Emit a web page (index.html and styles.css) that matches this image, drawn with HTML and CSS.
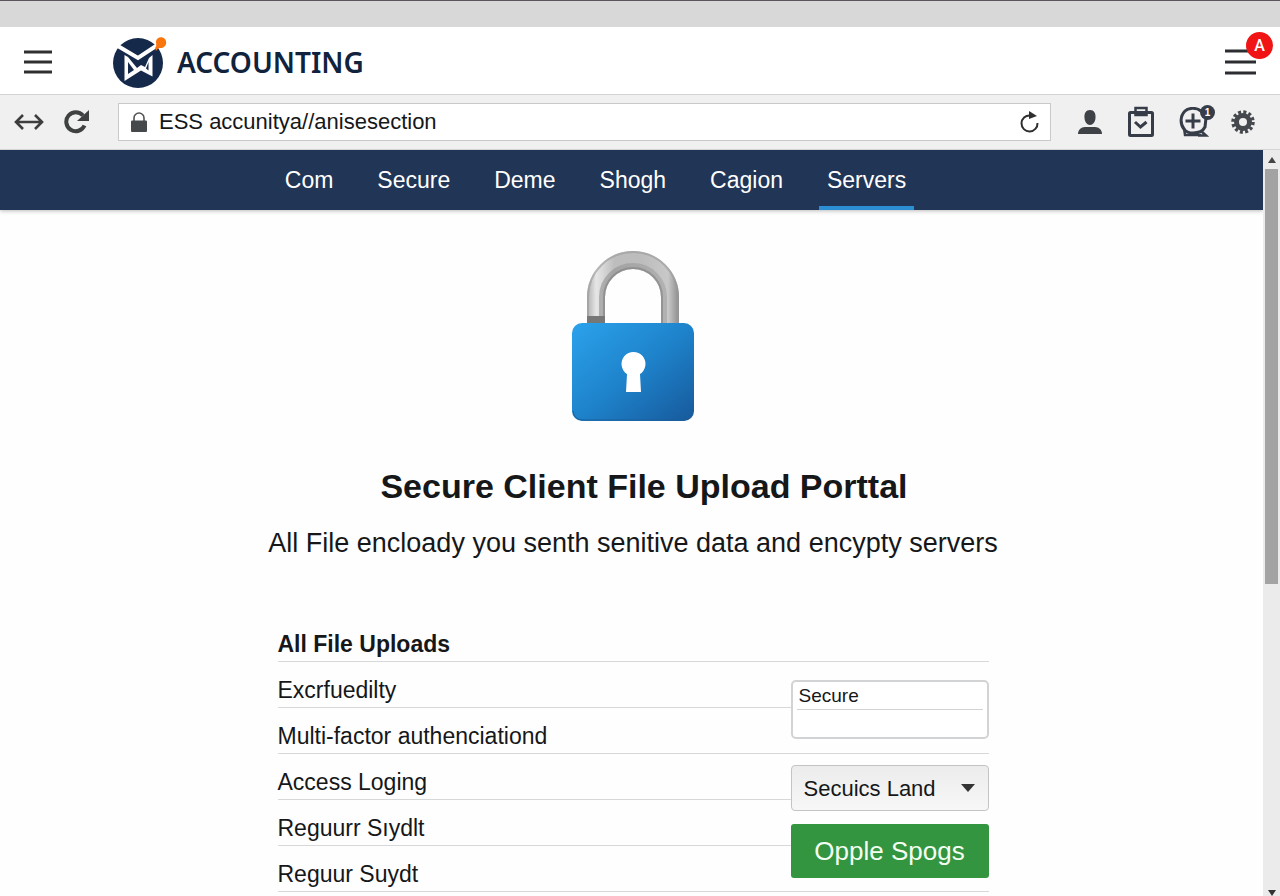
FILE: index.html
```html
<!DOCTYPE html>
<html lang="en">
<head>
<meta charset="utf-8">
<meta name="viewport" content="width=device-width, initial-scale=1">
<title>Secure Client File Upload Porttal</title>
<link rel="stylesheet" href="styles.css">
</head>
<body>
<div class="titlebar"></div>
<header class="header">
  <button class="menu" type="button" aria-label="Menu">
    <svg width="28" height="24" viewBox="0 0 28 24"><path d="M0 2h28M0 12h28M0 22h28" stroke="#303030" stroke-width="3"/></svg>
  </button>
  <a class="brand" href="#">
    <svg width="54" height="52" viewBox="0 0 54 52">
      <circle cx="25" cy="27" r="25" fill="#15294b"/>
      <path d="M4 9.500L25 22 46 8" fill="none" stroke="#fff" stroke-width="4"/>
      <path d="M11.500 19l3.500 2 9 11 4-3 4 2 4-9 3.500-3v21.500L28 34.500 11.500 45z" fill="#fff"/>
      <path d="M15 26l6 8-6 4zM35.500 26v8.500l-2.500-2z" fill="#15294b"/>
      <path d="M43 5c1-4 6-5 9-2 3 4 0 9-4 9-2 0-3 0-5 3l-1-3c2-2 1-4 1-7z" fill="#fb750d"/>
    </svg>
    <span>ACCOUNTING</span>
  </a>
  <button class="menu menu-account" type="button" aria-label="Account menu">
    <svg width="31" height="26" viewBox="0 0 31 26"><path d="M0 2h31M0 13h31M0 24h31" stroke="#2b2d30" stroke-width="3"/></svg>
    <span class="badge">A</span>
  </button>
</header>
<div class="toolbar">
  <button class="tool" type="button" aria-label="Back and forward">
    <svg width="30" height="18" viewBox="0 0 30 18" fill="none" stroke="#3d3d3d" stroke-width="2.600"><path d="M2 9h26M9 2L2 9l7 7M21 2l7 7-7 7"/></svg>
  </button>
  <button class="tool" type="button" aria-label="Reload page">
    <svg width="26" height="26" viewBox="0 0 26 26"><path d="M20.500 16.500A9.500 9.500 0 1 1 19 6.500" fill="none" stroke="#3f4041" stroke-width="4"/><path d="M25 1v11H13z" fill="#3f4041"/></svg>
  </button>
  <form class="address">
    <svg width="16" height="20" viewBox="0 0 16 20"><path d="M3 10V6a5 5 0 0 1 10 0v4" fill="none" stroke="#505356" stroke-width="1.600"/><rect x="0" y="8.500" width="16" height="11.500" rx="1" fill="#46494c"/></svg>
    <input type="text" aria-label="Address" value="ESS accunitya//anisesection">
    <button class="tool" type="button" aria-label="Refresh">
      <svg width="20" height="22" viewBox="0 0 20 22"><path d="M10 4.500A8 8 0 1 0 17.500 12" fill="none" stroke="#2d2f31" stroke-width="2"/><path d="M9 0l8 5-8 3z" fill="#2d2f31"/></svg>
    </button>
  </form>
  <div class="actions">
    <button class="tool" type="button" aria-label="Profile">
      <svg width="26" height="26" viewBox="0 0 26 26" fill="#3e4145"><path d="M13 1c4 0 6 3 5.500 8-.3 4-2.500 7-5.500 7s-5.200-3-5.500-7C7 4 9 1 13 1z"/><path d="M1 25c0-4 3-7 7-7h10c4 0 7 3 7 7z"/></svg>
    </button>
    <button class="tool" type="button" aria-label="Tasks">
      <svg width="28" height="32" viewBox="0 0 28 32" fill="none" stroke="#363c48" stroke-width="3"><rect x="2.500" y="6.500" width="23" height="23" rx="1"/><path d="M8.500 9V2h11v7z" stroke-width="2.500"/><path d="M8 16l5.500 5 6-5" stroke-width="3"/></svg>
    </button>
    <button class="tool tool-add" type="button" aria-label="Add, 1 new">
      <svg width="30" height="30" viewBox="0 0 30 30" fill="none" stroke="#363c48"><path d="M22 4C17 0 9 1 6 4c-5 5-5 13-1 18 2 3 5 4 9 4 6 0 10-2 12-6l1-9" stroke-width="3"/><path d="M5 21l1 7h16M22 24l5 4.500h-8" stroke-width="2.500"/><path d="M14 6.500v15M6.500 14h15" stroke-width="3"/></svg>
      <span class="count">1</span>
    </button>
    <button class="tool" type="button" aria-label="Settings">
      <svg width="24" height="24" viewBox="0 0 24 24" fill="none" stroke="#45484c"><circle cx="12" cy="12" r="6.500" stroke-width="5"/><circle cx="12" cy="12" r="10" stroke-width="3.500" stroke-dasharray="3 2.236"/></svg>
    </button>
  </div>
</div>
<div class="viewport">
  <div class="page">
    <nav class="nav">
      <a href="#">Com</a>
      <a href="#">Secure</a>
      <a href="#">Deme</a>
      <a href="#">Shogh</a>
      <a href="#">Cagion</a>
      <a class="active" href="#">Servers</a>
    </nav>
    <main class="main">
      <svg class="lock" width="122" height="170" viewBox="0 0 122 170" role="img" aria-label="Padlock">
        <defs>
          <linearGradient id="body" x1="0" y1="0" x2="1" y2="1"><stop offset="0" stop-color="#2ba2ec"/><stop offset=".5" stop-color="#1e83cb"/><stop offset="1" stop-color="#17599b"/></linearGradient>
          <linearGradient id="metal" x1="0" y1="0" x2="1" y2="0"><stop offset="0" stop-color="#b0b0b0"/><stop offset=".1" stop-color="#e6e6e6"/><stop offset=".3" stop-color="#bdbdbd"/><stop offset=".6" stop-color="#bdbdbd"/><stop offset=".88" stop-color="#c8c8c8"/><stop offset="1" stop-color="#8c8c8c"/></linearGradient>
          <linearGradient id="inner" x1="0" y1="0" x2="1" y2="0"><stop offset="0" stop-color="#8a8a8a"/><stop offset="1" stop-color="#a0a0a0"/></linearGradient>
        </defs>
        <path d="M15 74V46a46 46 0 0 1 92 0v28H89V46a28 28 0 0 0-56 0v28z" fill="url(#metal)"/>
        <path d="M30 74V46a31 31 0 0 1 62 0v28" fill="none" stroke="url(#inner)" stroke-width="6" opacity=".55"/>
        <path d="M32 74V46a29 29 0 0 1 58 0v28" fill="none" stroke="#808080" stroke-width="2" opacity=".6"/>
        <path d="M16 74V46a45 45 0 0 1 90 0v28" fill="none" stroke="#999" stroke-width="2" opacity=".6"/>
        <path d="M15 65h18v8H15z" fill="#777"/>
        <rect x="0" y="72" width="122" height="98" rx="10" fill="url(#body)"/>
        <path d="M1 160q1 9 10 9h100q9 0 10-9" fill="none" stroke="#1b5e9c" stroke-width="1"/>
        <path d="M55 123a12 12 0 1 1 13 0l1 18H54z" fill="#fff"/>
      </svg>
      <h1>Secure Client File Upload Porttal</h1>
      <p class="lead">All File encloady you senth senitive data and encypty servers</p>
      <section class="uploads">
        <div class="list">
          <h2>All File Uploads</h2>
          <ul>
            <li>Excrfuedilty</li>
            <li>Multi-factor authenciationd</li>
            <li>Access Loging</li>
            <li>Reguurr Sıydlt</li>
            <li>Reguur Suydt</li>
          </ul>
        </div>
        <form class="controls">
          <div class="fields">
            <input type="text" aria-label="Upload name" value="Secure">
            <input type="text" aria-label="Upload details">
          </div>
          <div class="picker">
            <select aria-label="Server"><option>Secuics Land</option></select>
            <svg width="14" height="8" viewBox="0 0 14 8"><path d="M0 0h14L7 8z" fill="#333"/></svg>
          </div>
          <button class="submit" type="button">Opple Spogs</button>
        </form>
      </section>
    </main>
  </div>
  <div class="scrollbar">
    <svg width="8" height="6" viewBox="0 0 8 6"><path d="M0 6h8L4 0z" fill="#444"/></svg>
    <div class="track"><div class="thumb"></div></div>
    <svg width="8" height="6" viewBox="0 0 8 6"><path d="M0 0h8L4 6z" fill="#333"/></svg>
  </div>
</div>
</body>
</html>
```

FILE: styles.css
```css
* { box-sizing: border-box; }

body {
  margin: 0;
  height: 100vh;
  display: flex;
  flex-direction: column;
  overflow: hidden;
  background: #fefefe;
  color: #151719;
  font-family: "Liberation Sans", Arial, sans-serif;
}

button, input, select { font: inherit; color: inherit; }
button { border: 0; padding: 0; background: none; cursor: pointer; }
svg { display: block; flex: none; }
a { color: inherit; text-decoration: none; }

.titlebar {
  flex: none;
  height: 27px;
  background: #d8d8d8;
  border-top: 1px solid #59555a;
}

.header {
  flex: none;
  display: flex;
  align-items: center;
  height: 67px;
  padding: 2px 24px 0;
  background: #fff;
}

.brand {
  display: flex;
  align-items: center;
  gap: 10px;
  margin-left: 61px;
  color: #10223c;
  font: 600 28px/40px "Noto Sans", sans-serif;
}

.menu-account { position: relative; margin-left: auto; }

.badge {
  position: absolute;
  top: -17px;
  right: -17px;
  width: 27px;
  border-radius: 50%;
  background: #f01414;
  color: #fff;
  font: 500 16px/27px Roboto, sans-serif;
  text-align: center;
}

.toolbar {
  flex: none;
  display: flex;
  align-items: center;
  height: 56px;
  padding: 0 25px 0 14px;
  border-top: 1px solid #d4d4d4;
  border-bottom: 1px solid #d4d4d4;
  background: #f0f0f0;
}

.toolbar > .tool + .tool { margin-left: 20px; }

.address {
  flex: 1;
  display: flex;
  align-items: center;
  height: 38px;
  margin-left: 28px;
  padding: 0 10px 0 12px;
  border: 1px solid #c9c9c9;
  background: #fff;
}

.address input {
  flex: 1;
  min-width: 0;
  padding: 0 12px;
  border: 0;
  outline: 0;
  background: none;
  font-size: 22px;
}

.actions {
  display: flex;
  align-items: center;
  gap: 24px;
  margin-left: 26px;
}

.tool-add { position: relative; margin-right: -2px; }

.count {
  position: absolute;
  top: -2px;
  right: -6px;
  width: 15px;
  border-radius: 50%;
  background: #363c48;
  color: #fff;
  font: bold 10px/15px "Liberation Sans", sans-serif;
  text-align: center;
}

.viewport { flex: 1; min-height: 0; display: flex; }
.page { flex: 1; min-width: 0; overflow: hidden; }

.nav {
  display: flex;
  justify-content: center;
  gap: 28px;
  padding-right: 72px;
  background: #213556;
  box-shadow: 0 1px 4px #bbb;
  color: #fff;
  font-size: 23px;
  line-height: 60px;
}

.nav a { padding: 0 8px; height: 60px; }
.nav .active { box-shadow: inset 0 -4px #2c8fd4; }

.main {
  display: flex;
  flex-direction: column;
  align-items: center;
  padding: 41px 0 0 3px;
}

h1 { margin: 44px 0 0; padding-left: 22px; font-size: 34px; line-height: 42px; }
.lead { margin: 16px 0 0; font-size: 27px; line-height: 40px; }

.uploads {
  display: grid;
  grid-template-columns: 1fr 198px;
  width: 100%;
  max-width: 711px;
  margin-top: 53px;
}

.list { grid-area: 1 / 1 / 2 / 3; font-size: 23px; }
.list h2, .list li { margin: 0; height: 46px; border-bottom: 1px solid #d6d8d9; font-size: inherit; line-height: 56px; }
.list ul { margin: 0; padding: 0; list-style: none; }

.controls {
  grid-area: 1 / 2;
  display: flex;
  flex-direction: column;
  padding-top: 64px;
}

.fields {
  display: flex;
  flex-direction: column;
  height: 59px;
  padding: 0 4px;
  border: 2px solid #d2d3d4;
  border-radius: 5px;
  background: #fff;
}

.fields input {
  flex: 1;
  min-height: 0;
  width: 100%;
  padding: 0 2px;
  border: 0;
  outline: 0;
  background: none;
  font-size: 19px;
}

.fields input:first-child { border-bottom: 1px solid #d2d3d4; }

.picker { display: grid; align-items: center; margin-top: 26px; }
.picker select {
  grid-area: 1 / 1;
  appearance: none;
  width: 100%;
  height: 46px;
  padding: 0 12px;
  border: 1px solid #c4c4c4;
  border-radius: 4px;
  background: linear-gradient(#ececec, #f7f7f7);
  font-size: 22px;
}
.picker svg { grid-area: 1 / 1; justify-self: end; margin-right: 14px; pointer-events: none; }

.submit {
  height: 54px;
  margin-top: 13px;
  border-radius: 3px;
  background: #339540;
  color: #f4fff2;
  font-size: 26px;
}

.scrollbar {
  flex: none;
  display: flex;
  flex-direction: column;
  align-items: center;
  width: 17px;
  padding: 7px 0 0;
  background: #ebebeb;
}

.track { flex: 1; width: 13px; margin: 6px 0; }
.thumb { height: 58%; background: #a3a3a3; }
```
